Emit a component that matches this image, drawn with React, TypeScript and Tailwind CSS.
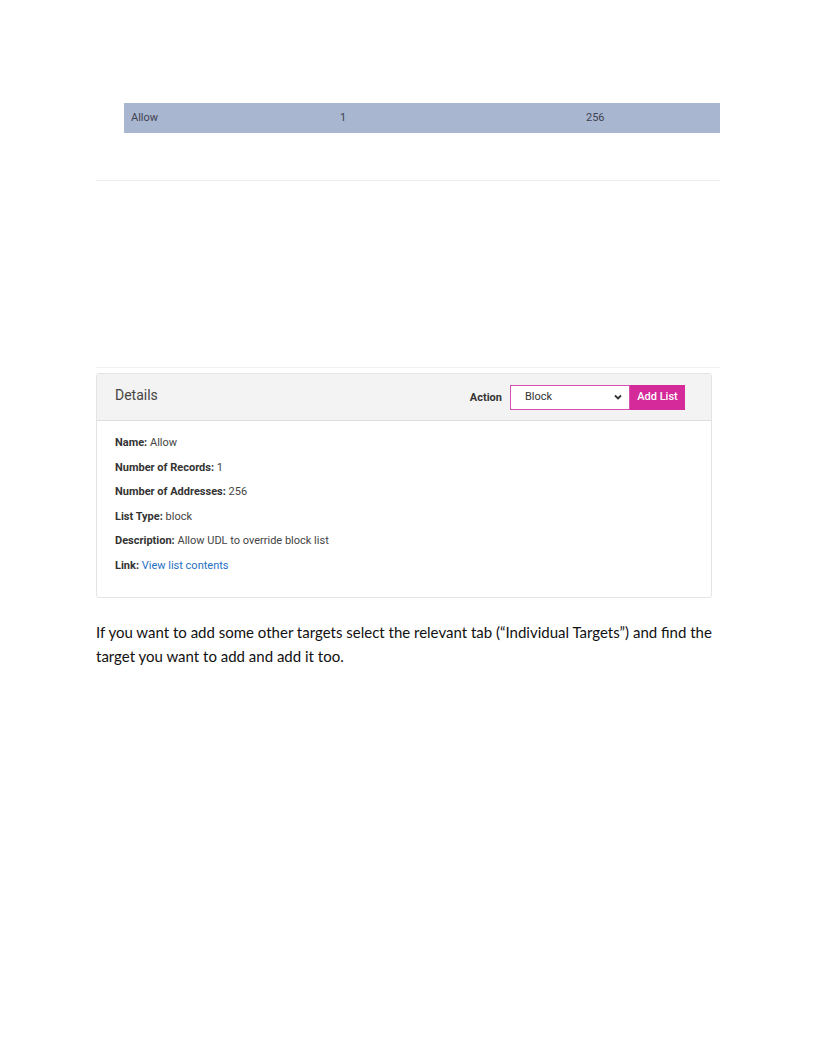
import React from 'react';

const details = [
  { label: 'Name:', value: 'Allow' },
  { label: 'Number of Records:', value: '1' },
  { label: 'Number of Addresses:', value: '256' },
  { label: 'List Type:', value: 'block' },
  { label: 'Description:', value: 'Allow UDL to override block list' },
];

export default function App() {
  return (
    <div className="w-[816px] h-[1056px] bg-white font-['Roboto',sans-serif]">
      <div className="pt-[103px] pl-[96px] w-[720px]">
        {/* table row */}
        <div className="ml-[28px] h-[30px] bg-[#a9b6d0] flex items-center text-[11px] text-[#3f4350]">
          <span className="pl-[7px] w-[216px]">Allow</span>
          <span className="w-[246px]">1</span>
          <span>256</span>
        </div>
        <div className="mt-[47px] h-px bg-[#ececec]" />
        <div className="mt-[186px] h-px bg-[#f0f0f0]" />

        {/* details card */}
        <div className="mt-[5px] w-[616px] border border-[#e4e4e4] rounded-[3px] overflow-hidden">
          <div className="h-[47px] bg-[#f3f3f3] border-b border-[#dddddd] flex items-center pl-[18px] pr-[26px]">
            <span className="text-[14px] text-[#444] mb-[3px]">Details</span>
            <span className="ml-auto text-[11px] font-bold text-[#333] mr-[8px] mt-[2px]">Action</span>
            <div className="w-[120px] h-[25px] bg-white border border-[#d94fb0] flex items-center pl-[14px] pr-[6px] text-[11px] text-[#333]">
              <span>Block</span>
              <svg className="ml-auto" width="10" height="10" viewBox="0 0 10 10">
                <path d="M2 3.5 L5 6.5 L8 3.5" fill="none" stroke="#333" strokeWidth="1.8" />
              </svg>
            </div>
            <div className="w-[55px] h-[25px] bg-[#d42a9a] text-white text-[11px] font-medium flex items-center justify-center">
              Add List
            </div>
          </div>
          <div className="pl-[18px] pt-[14px] pb-[24px] flex flex-col gap-[9.5px] text-[11px] text-[#444]">
            {details.map((d) => (
              <div key={d.label} className="leading-[15px]">
                <span className="font-bold text-[#333]">{d.label}</span> {d.value}
              </div>
            ))}
            <div className="leading-[15px]">
              <span className="font-bold text-[#333]">Link:</span>{' '}
              <span className="text-[#1f6fc5]">View list contents</span>
            </div>
          </div>
        </div>

        <p className="mt-[22px] w-[640px] text-[15px] leading-[24px] text-[#111] font-['Lato',sans-serif]">
          If you want to add some other targets select the relevant tab (“Individual Targets”) and find the target you want to add and add it too.
        </p>
      </div>
    </div>
  );
}
